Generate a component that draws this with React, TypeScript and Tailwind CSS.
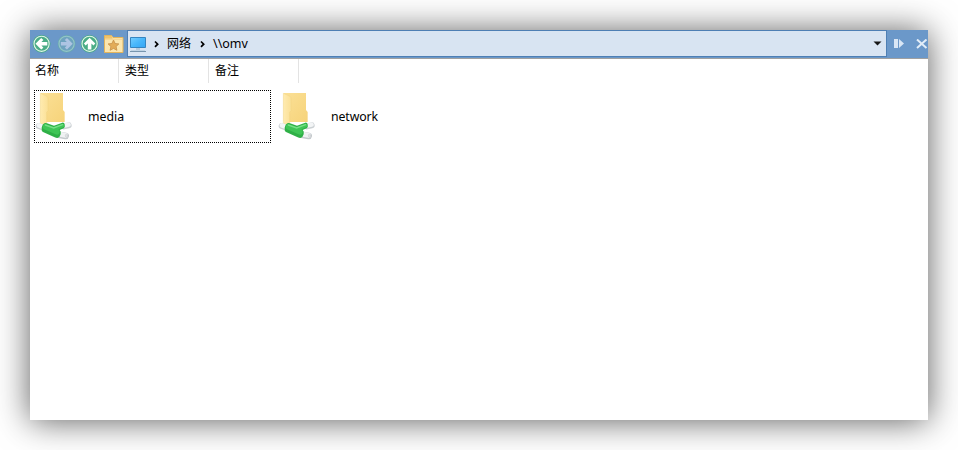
import React from 'react';

function ArrowButton({ turn, faded }: { turn: number; faded?: boolean }) {
  return (
    <svg width="18" height="18" viewBox="0.4 0.2 18 18" className={faded ? 'shrink-0 overflow-visible opacity-90' : 'shrink-0 overflow-visible'}>
      <circle cx="9" cy="9" r="8.9" fill={faded ? '#68adad' : '#43a982'} />
      <circle cx="9" cy="9" r="7.6" fill={faded ? '#6fa5be' : '#4bad86'} stroke={faded ? '#9acbc8' : '#e2f5e8'} strokeWidth="1.1" />
      <path
        d="M2.9 9 8.6 3.3l2.2 1.8-2 2.1h5.9v3.6H8.8l2 2.1-2.2 1.8z"
        fill={faded ? '#b5c9e6' : '#fff'}
        transform={`rotate(${turn} 9 9)`}
      />
    </svg>
  );
}

function FavoriteFolder() {
  return (
    <svg width="20" height="20" viewBox="0 0 20 20" className="shrink-0">
      <path d="M.5 18.5V1.5h7l1.5 2h10v15z" fill="#fce6ae" stroke="#e3b45b" />
      <path d="M1 4.8V2h6.5l1.2 2.8z" fill="#efc36c" />
      <path d="M1 5.2h17.5" stroke="#f5d088" />
      <path d="m9.5 6 1.6 3.5 3.8.4-2.8 2.6.8 3.8-3.4-1.9-3.4 1.9.8-3.8-2.8-2.6 3.8-.4z" fill="#e3ac58" stroke="#c58f49" strokeWidth=".8" />
    </svg>
  );
}

function Computer() {
  return (
    <svg width="17" height="16" viewBox="0 0 17 16" className="shrink-0">
      <defs>
        <linearGradient id="screen" x1="0" y1="0" x2="1" y2="1">
          <stop offset="0" stopColor="#75cdff" />
          <stop offset=".5" stopColor="#48b7fb" />
          <stop offset="1" stopColor="#35a5f4" />
        </linearGradient>
      </defs>
      <path d="M.5.5h15v10H.5z" fill="url(#screen)" stroke="#3585c0" />
      <path d="M6 11h4v2H6z" fill="#b5cadc" />
      <path d="M0 14.5h16" stroke="#7795ae" />
      <path d="M1 13.5h14" stroke="#c1d4e4" />
    </svg>
  );
}

function Chevron() {
  return (
    <svg width="6" height="8" viewBox="0 0 6 8" className="shrink-0">
      <path d="m1 1.5 2.7 2.7L1 6.9" fill="none" stroke="#000" strokeWidth="1.7" />
    </svg>
  );
}

function SharedFolder() {
  return (
    <svg width="40" height="52" viewBox="18 21 120 156" className="shrink-0">
      <defs>
        <linearGradient id="back" x1="0" y1="0" x2="1" y2="1">
          <stop offset="0" stopColor="#fbe096" />
          <stop offset="1" stopColor="#f6d37a" />
        </linearGradient>
        <linearGradient id="front" x1="0" y1="0" x2="1" y2="0">
          <stop offset="0" stopColor="#ffebb0" />
          <stop offset="1" stopColor="#fbe096" />
        </linearGradient>
      </defs>
      <path d="M38 27h67v51l5 6v30H55L38 112z" fill="url(#back)" />
      <path d="M37 28 57 37q3 2 3 6v37l-4 5v43l-19-10z" fill="url(#front)" stroke="#edcd78" strokeWidth="1" />
      <g fill="none" strokeLinecap="round">
        <path d="m32 126 17 6" stroke="#cbd0d3" strokeWidth="18" />
        <path d="m32 124 17 6" stroke="#f3f5f6" strokeWidth="13" />
        <path d="m108 127 14-3" stroke="#cbd0d3" strokeWidth="18" />
        <path d="m108 125 14-3" stroke="#f3f5f6" strokeWidth="13" />
        <path d="m92 152 21 4" stroke="#c5cacd" strokeWidth="20" />
        <path d="m92 150 21 4" stroke="#f0f2f3" strokeWidth="15" />
        <ellipse cx="116" cy="155" rx="4" ry="5" fill="#dfe2e4" stroke="#b8bdbf" />
      </g>
      <path d="M49 118q4-2 8 0l21 7 25-9q5-1 7 5 2 8-3 12l-12 5q5 4 3 13-2 9-10 11-4 0-8-2l-35-16q-5-3-4-13 2-10 8-13z" fill="#2fb047" />
      <path d="M50 120l27 9 27-10q4 0 5 6 0 4-4 5l-14 6q5 2 4 9-1 7-7 7-3 0-7-2l-33-14q-5-3-3-10 1-5 5-6z" fill="#3fc556" />
      <path d="m52 123 25 9 27-10" fill="none" stroke="#75df86" strokeWidth="4" strokeLinecap="round" />
    </svg>
  );
}

function Column({ label }: { label: string }) {
  return (
    <div className="flex h-[24px] w-[90px] items-center border-r border-[#e3e3e3] pl-[6px] text-[12px] leading-[24px]">{label}</div>
  );
}

export default function App() {
  return (
    <div className="h-[450px] w-[958px] overflow-hidden bg-white p-[30px] font-['Noto_Sans','Noto_Sans_CJK_SC',sans-serif] text-black">
      <main className="h-[390px] w-[898px] bg-white shadow-[0_1px_32px_rgba(0,0,0,0.64)]">
        <header className="flex h-[29px] overflow-hidden border-b border-[#a0a0a0] bg-[#6b98c9]">
          <nav className="flex w-[97px] shrink-0 items-center pl-[3px]">
            <ArrowButton turn={0} />
            <div className="ml-[7px] flex"><ArrowButton turn={180} faded /></div>
            <div className="ml-[5px] flex"><ArrowButton turn={90} /></div>
            <div className="ml-[5px] flex"><FavoriteFolder /></div>
          </nav>
          <div className="flex h-[27px] w-[760px] shrink-0 items-center border border-[#4e7fb4] bg-[#d8e4f2] pl-[2px] text-[12px]">
            <div className="flex pt-[2px]"><Computer /></div>
            <div className="ml-[7px] flex pt-px"><Chevron /></div>
            <span className="ml-[7px] w-[26px] leading-[18px]">网络</span>
            <div className="ml-[7px] flex pt-px"><Chevron /></div>
            <span className="ml-[7px] text-[12.5px] leading-[18px]">\\omv</span>
            <svg width="9" height="5" viewBox="0 0 9 5" className="mr-[4px] ml-auto"><path d="M.5.5h8l-4 4z" fill="#171717" /></svg>
          </div>
          <div className="flex w-[41px] shrink-0 items-center pl-[7px]">
            <svg width="11" height="10" viewBox="0 0 11 10" className="shrink-0"><path d="M0 0h4v9H0zM5 0l5 4.5L5 9z" fill="#d9e6f5" /></svg>
            <svg width="12" height="10" viewBox="0 0 12 10" className="ml-[11px] shrink-0"><path d="m1 .5 9.5 8.5M10.5.5 1 9" stroke="#e2edf8" strokeWidth="2" /></svg>
          </div>
        </header>
        <div className="flex h-[31px] items-start">
          <div className="-ml-px flex"><Column label="名称" /><Column label="类型" /><Column label="备注" /></div>
        </div>
        <section className="flex gap-[6px] pl-[4px] text-[12.3px]">
          <div className="flex h-[53px] w-[237px] items-center border border-dotted border-black">
            <div className="-ml-px flex"><SharedFolder /></div>
            <span className="ml-[14px] pt-[2px]">media</span>
          </div>
          <div className="flex h-[53px] items-center">
            <SharedFolder />
            <span className="ml-[14px] pt-[2px] tracking-[-0.1px]">network</span>
          </div>
        </section>
      </main>
    </div>
  );
}
